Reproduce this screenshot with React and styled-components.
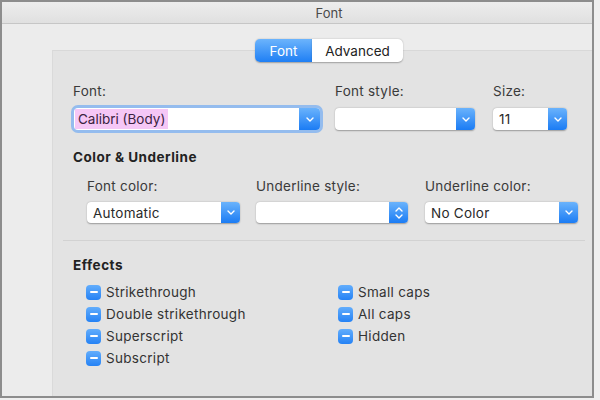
import React from "react";
import styled, { createGlobalStyle } from "styled-components";

const GlobalStyle = createGlobalStyle`
  html, body { margin: 0; padding: 0; background: #efefef; }
  body { font-family: Inter, "Liberation Sans", sans-serif; -webkit-font-smoothing: antialiased; }
  * { box-sizing: border-box; }
`;

const Window = styled.div`
  width: 594px;
  height: 398px;
  border: 2px solid #8d8d8d;
  background: #ececec;
  display: flex;
  flex-direction: column;
  overflow: hidden;
`;

const TitleBar = styled.div`
  height: 22px;
  flex: none;
  background: linear-gradient(#ededed, #e0e0e0);
  border-bottom: 1px solid #c6c6c6;
  display: flex;
  align-items: center;
  justify-content: center;
  padding-left: 64px;
  font-size: 13px;
  color: #4a4a4a;
`;

const Body = styled.div`
  flex: 1;
  display: flex;
  flex-direction: column;
`;

const TabRow = styled.div`
  position: relative;
  z-index: 1;
  display: flex;
  margin-top: 15px;
  padding-left: 253px;
  height: 23px;
`;

const Tab = styled.div`
  height: 23px;
  width: ${(p) => p.$w}px;
  display: flex;
  align-items: center;
  justify-content: center;
  font-size: 13.5px;
  color: ${(p) => (p.$active ? "#fff" : "#222")};
  background: ${(p) => (p.$active ? "linear-gradient(#6cb4fc, #1f7ff4)" : "#fff")};
  border-radius: ${(p) => (p.$active ? "5px 0 0 5px" : "0 5px 5px 0")};
  box-shadow: 0 0.5px 1.5px rgba(0, 0, 0, 0.3);
`;

const Panel = styled.div`
  flex: 1;
  margin-top: -12px;
  margin-left: 50px;
  background: #e3e3e3;
  border-top: 1px solid #d8d8d8;
  border-left: 1px solid #dadada;
  padding: 32px 0 0 20px;
  display: flex;
  flex-direction: column;
`;

const TopGrid = styled.div`
  display: grid;
  grid-template-columns: 262px 158px 80px;
`;

const Field = styled.div`
  display: flex;
  flex-direction: column;
  gap: ${(p) => p.$gap || 9}px;
`;

const Label = styled.div`
  font-size: 13.5px;
  line-height: 16px;
  letter-spacing: 0.25px;
  color: #3a3a3a;
`;

const Heading = styled.div`
  font-size: 13.5px;
  line-height: 16px;
  font-weight: 700;
  letter-spacing: 0.5px;
  color: #222;
  margin-top: ${(p) => p.$mt}px;
`;

const Popup = styled.div`
  display: flex;
  width: ${(p) => p.$w}px;
  height: ${(p) => p.$h || 22}px;
  margin-left: ${(p) => p.$ml || 0}px;
  background: #fff;
  border-radius: 4px;
  box-shadow: ${(p) =>
    p.$focus
      ? "0 0 0 3px rgba(128, 178, 240, 0.8)"
      : "0 0.5px 1.5px rgba(0, 0, 0, 0.32)"};
`;

const PopupValue = styled.div`
  flex: 1;
  display: flex;
  align-items: center;
  padding-left: ${(p) => p.$pl ?? 6}px;
  font-size: 13.5px;
  letter-spacing: 0.25px;
  color: #2a2a2a;
  overflow: hidden;
`;

const Highlight = styled.span`
  align-self: stretch;
  display: flex;
  align-items: center;
  margin: 1px 0;
  padding: 0 3px;
  letter-spacing: 0;
  background: #f5c7f6;
  color: #3a2340;
`;

const ArrowButton = styled.div`
  width: ${(p) => p.$w || 19}px;
  flex: none;
  background: linear-gradient(#6ab3fc, #1b7cf4);
  border-radius: 0 4px 4px 0;
  display: flex;
  flex-direction: column;
  align-items: center;
  justify-content: center;
  gap: 2px;
`;

const SubGrid = styled.div`
  display: grid;
  grid-template-columns: 169px 169px 153px;
  margin-top: 13px;
  padding-left: 14px;
`;

const Separator = styled.div`
  height: 1px;
  background: #d2d2d2;
  margin: 17px 7px 0 -10px;
`;

const CheckGrid = styled.div`
  display: grid;
  grid-template-columns: 252px 200px;
  grid-auto-flow: column;
  grid-template-rows: repeat(4, 22px);
  margin-top: 8px;
  padding-left: 13px;
`;

const CheckRow = styled.div`
  display: flex;
  align-items: center;
  gap: 5px;
  font-size: 13.5px;
  letter-spacing: 0.3px;
  color: #333;
`;

const CheckBox = styled.span`
  width: 15px;
  height: 15px;
  border-radius: 4px;
  background: linear-gradient(#62adfc, #2582f5);
  display: flex;
  align-items: center;
  justify-content: center;
  flex: none;
  &::after {
    content: "";
    width: 8px;
    height: 2px;
    border-radius: 1px;
    background: #fff;
  }
`;

const Chevron = ({ up }) => (
  <svg width="8" height="5" viewBox="0 0 8 5">
    <path
      d={up ? "M1 4 L4 1 L7 4" : "M1 1 L4 4 L7 1"}
      stroke="#fff"
      strokeWidth="1.4"
      fill="none"
      strokeLinecap="round"
      strokeLinejoin="round"
    />
  </svg>
);

const Select = ({ w, value, focus, ml, h, stepper, highlight, arrowW }) => (
  <Popup $w={w} $focus={focus} $ml={ml} $h={h}>
    <PopupValue $pl={highlight ? 1 : 6}>
      {highlight ? <Highlight>{value}</Highlight> : value}
    </PopupValue>
    <ArrowButton $w={arrowW}>
      {stepper ? (
        <>
          <Chevron up />
          <Chevron />
        </>
      ) : (
        <Chevron />
      )}
    </ArrowButton>
  </Popup>
);

const left = ["Strikethrough", "Double strikethrough", "Superscript", "Subscript"];
const right = ["Small caps", "All caps", "Hidden"];

export default function App() {
  return (
    <>
      <GlobalStyle />
      <Window>
        <TitleBar>Font</TitleBar>
        <Body>
          <TabRow>
            <Tab $active $w={57}>Font</Tab>
            <Tab $w={91}>Advanced</Tab>
          </TabRow>
          <Panel>
            <TopGrid>
              <Field>
                <Label>Font:</Label>
                <Select w={246} ml={1} value="Calibri (Body)" focus highlight arrowW={21} />
              </Field>
              <Field>
                <Label>Font style:</Label>
                <Select w={140} value="" />
              </Field>
              <Field>
                <Label>Size:</Label>
                <Select w={74} value="11" />
              </Field>
            </TopGrid>
            <Heading $mt={19}>Color &amp; Underline</Heading>
            <SubGrid>
              <Field $gap={8}>
                <Label>Font color:</Label>
                <Select w={153} h={21} value="Automatic" />
              </Field>
              <Field $gap={8}>
                <Label>Underline style:</Label>
                <Select w={152} h={21} value="" stepper />
              </Field>
              <Field $gap={8}>
                <Label>Underline color:</Label>
                <Select w={153} h={21} value="No Color" />
              </Field>
            </SubGrid>
            <Separator />
            <Heading $mt={16}>Effects</Heading>
            <CheckGrid>
              {left.map((t) => (
                <CheckRow key={t}>
                  <CheckBox />
                  {t}
                </CheckRow>
              ))}
              {right.map((t) => (
                <CheckRow key={t}>
                  <CheckBox />
                  {t}
                </CheckRow>
              ))}
            </CheckGrid>
          </Panel>
        </Body>
      </Window>
    </>
  );
}
